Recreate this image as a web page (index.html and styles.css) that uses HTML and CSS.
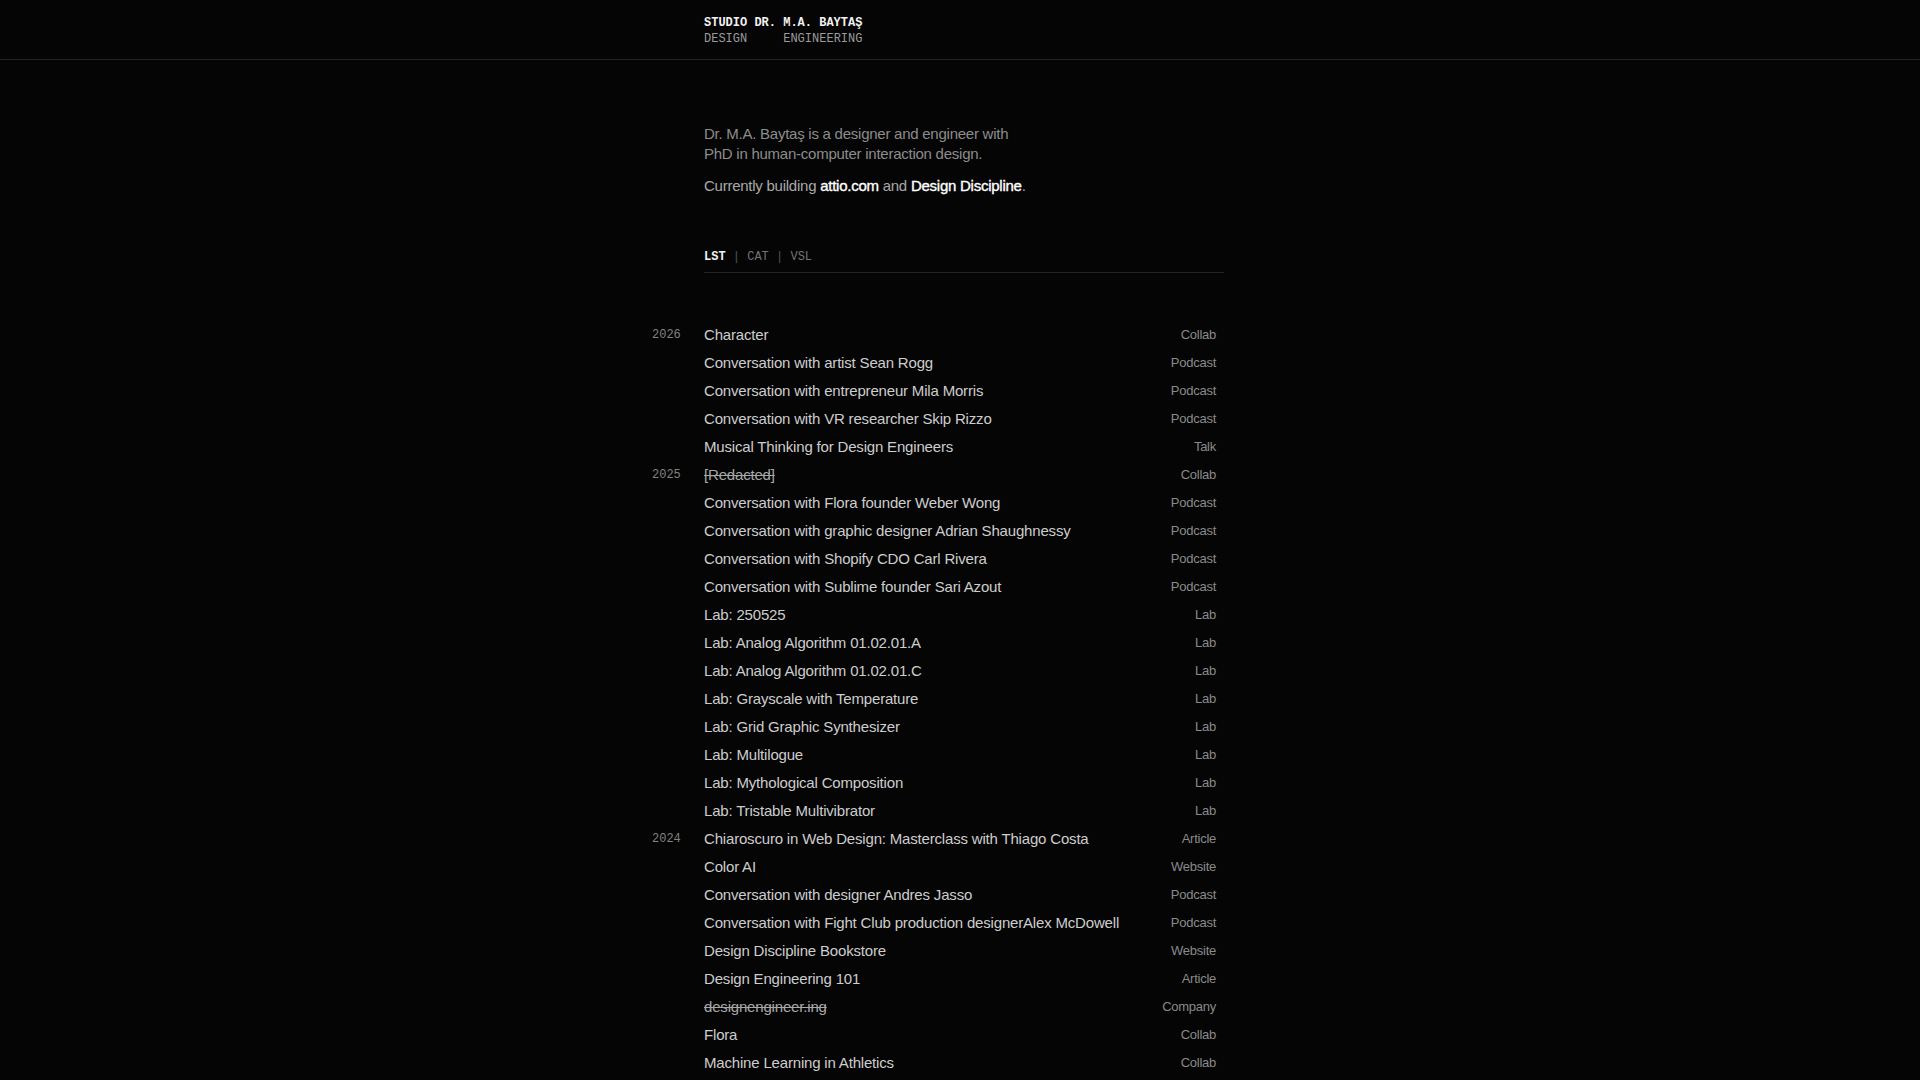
FILE: index.html
```html
<!DOCTYPE html>
<html lang="en">
<head>
<meta charset="utf-8">
<title>Studio Dr. M.A. Baytaş</title>
<link rel="stylesheet" href="styles.css">
</head>
<body>
<header class="site-header">
  <div class="wrap">
    <div class="brand">
      <div class="brand-name">STUDIO DR. M.A. BAYTAŞ</div>
      <div class="brand-sub"><span>DESIGN</span><span>ENGINEERING</span></div>
    </div>
  </div>
</header>
<main class="wrap main">
  <section class="intro">
    <p class="bio">Dr. M.A. Baytaş is a designer and engineer with<br>PhD in human-computer interaction design.</p>
    <p class="current">Currently building <a href="#">attio.com</a> and <a href="#">Design Discipline</a>.</p>
  </section>
  <nav class="views"><span class="view active">LST</span> <span class="sep">|</span> <span class="view">CAT</span> <span class="sep">|</span> <span class="view">VSL</span></nav>
  <ul class="list">
    <li class="row"><span class="year">2026</span><span class="title">Character</span><span class="cat">Collab</span></li>
    <li class="row"><span class="year"></span><span class="title">Conversation with artist Sean Rogg</span><span class="cat">Podcast</span></li>
    <li class="row"><span class="year"></span><span class="title">Conversation with entrepreneur Mila Morris</span><span class="cat">Podcast</span></li>
    <li class="row"><span class="year"></span><span class="title">Conversation with VR researcher Skip Rizzo</span><span class="cat">Podcast</span></li>
    <li class="row"><span class="year"></span><span class="title">Musical Thinking for Design Engineers</span><span class="cat">Talk</span></li>
    <li class="row"><span class="year">2025</span><span class="title struck">[Redacted]</span><span class="cat">Collab</span></li>
    <li class="row"><span class="year"></span><span class="title">Conversation with Flora founder Weber Wong</span><span class="cat">Podcast</span></li>
    <li class="row"><span class="year"></span><span class="title">Conversation with graphic designer Adrian Shaughnessy</span><span class="cat">Podcast</span></li>
    <li class="row"><span class="year"></span><span class="title">Conversation with Shopify CDO Carl Rivera</span><span class="cat">Podcast</span></li>
    <li class="row"><span class="year"></span><span class="title">Conversation with Sublime founder Sari Azout</span><span class="cat">Podcast</span></li>
    <li class="row"><span class="year"></span><span class="title">Lab: 250525</span><span class="cat">Lab</span></li>
    <li class="row"><span class="year"></span><span class="title">Lab: Analog Algorithm 01.02.01.A</span><span class="cat">Lab</span></li>
    <li class="row"><span class="year"></span><span class="title">Lab: Analog Algorithm 01.02.01.C</span><span class="cat">Lab</span></li>
    <li class="row"><span class="year"></span><span class="title">Lab: Grayscale with Temperature</span><span class="cat">Lab</span></li>
    <li class="row"><span class="year"></span><span class="title">Lab: Grid Graphic Synthesizer</span><span class="cat">Lab</span></li>
    <li class="row"><span class="year"></span><span class="title">Lab: Multilogue</span><span class="cat">Lab</span></li>
    <li class="row"><span class="year"></span><span class="title">Lab: Mythological Composition</span><span class="cat">Lab</span></li>
    <li class="row"><span class="year"></span><span class="title">Lab: Tristable Multivibrator</span><span class="cat">Lab</span></li>
    <li class="row"><span class="year">2024</span><span class="title">Chiaroscuro in Web Design: Masterclass with Thiago Costa</span><span class="cat">Article</span></li>
    <li class="row"><span class="year"></span><span class="title">Color AI</span><span class="cat">Website</span></li>
    <li class="row"><span class="year"></span><span class="title">Conversation with designer Andres Jasso</span><span class="cat">Podcast</span></li>
    <li class="row"><span class="year"></span><span class="title">Conversation with Fight Club production designerAlex McDowell</span><span class="cat">Podcast</span></li>
    <li class="row"><span class="year"></span><span class="title">Design Discipline Bookstore</span><span class="cat">Website</span></li>
    <li class="row"><span class="year"></span><span class="title">Design Engineering 101</span><span class="cat">Article</span></li>
    <li class="row"><span class="year"></span><span class="title struck">designengineer.ing</span><span class="cat">Company</span></li>
    <li class="row"><span class="year"></span><span class="title">Flora</span><span class="cat">Collab</span></li>
    <li class="row"><span class="year"></span><span class="title">Machine Learning in Athletics</span><span class="cat">Collab</span></li>
  </ul>
</main>
</body>
</html>
```

FILE: styles.css
```css
* { box-sizing: border-box; }

html, body {
  margin: 0;
  padding: 0;
  background: #050505;
}

body {
  font-family: "Liberation Sans", Arial, sans-serif;
  color: #cfcfcf;
  -webkit-font-smoothing: antialiased;
}

.wrap {
  width: 528px;
  margin: 0 auto;
  padding-left: 8px;
}

.site-header {
  border-bottom: 1px solid #222;
  padding: 15px 0 12px;
}

.brand {
  display: flex;
  flex-direction: column;
  width: max-content;
  font-family: "Liberation Mono", "DejaVu Sans Mono", monospace;
  font-size: 12px;
  line-height: 16px;
}

.brand-name {
  color: #f2f2f2;
  font-weight: 700;
}

.brand-sub {
  display: flex;
  justify-content: space-between;
  color: #9a9a9a;
}

.main {
  padding-top: 64px;
}

.intro p {
  margin: 0;
  font-size: 15px;
  line-height: 20px;
  letter-spacing: -0.25px;
}

.bio {
  color: #8c8c8c;
}

.intro .current {
  margin-top: 12px;
  color: #a9a9a9;
}

.current a {
  color: #ffffff;
  text-decoration: none;
  -webkit-text-stroke: 0.35px #ffffff;
}

.views {
  margin-top: 53px;
  padding-bottom: 7px;
  border-bottom: 1px solid #222;
  font-family: "Liberation Mono", "DejaVu Sans Mono", monospace;
  font-size: 12px;
  line-height: 16px;
  color: #737373;
}

.view.active {
  color: #f2f2f2;
  font-weight: 700;
}

.sep {
  color: #555;
}

.list {
  list-style: none;
  margin: 47px 0 0 -52px;
  padding: 0;
}

.row {
  display: grid;
  grid-template-columns: 52px 1fr auto;
  align-items: center;
  height: 28px;
  padding-right: 8px;
}

.year {
  font-family: "Liberation Mono", "DejaVu Sans Mono", monospace;
  font-size: 12px;
  color: #828282;
  padding-top: 1px;
}

.title {
  font-size: 15px;
  letter-spacing: -0.18px;
  color: #cdcdcd;
  white-space: nowrap;
}

.title.struck {
  text-decoration: line-through;
  color: #a8a8a8;
}

.cat {
  font-size: 13px;
  letter-spacing: -0.26px;
  color: #8a8a8a;
  text-align: right;
}
```
